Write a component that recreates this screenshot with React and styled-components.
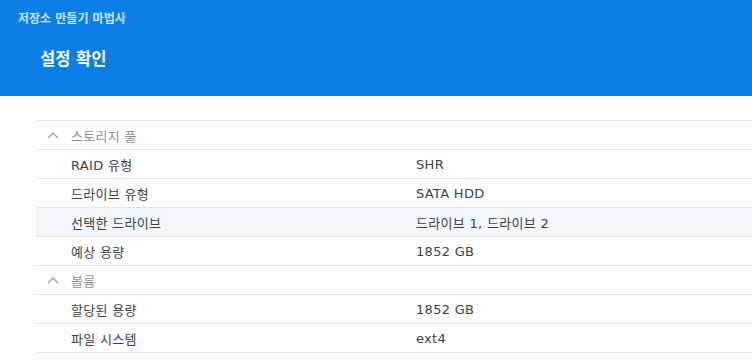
import React from 'react';
import styled, { createGlobalStyle } from 'styled-components';

const GlobalStyle = createGlobalStyle`
  html, body {
    margin: 0;
    padding: 0;
    background: #fff;
    font-family: "DejaVu Sans", "Noto Sans CJK KR", sans-serif;
  }
`;

const sections = [
  {
    title: '스토리지 풀',
    rows: [
      { label: 'RAID 유형', value: 'SHR' },
      { label: '드라이브 유형', value: 'SATA HDD' },
      { label: '선택한 드라이브', value: '드라이브 1, 드라이브 2', active: true },
      { label: '예상 용량', value: '1852 GB' },
    ],
  },
  {
    title: '볼륨',
    rows: [
      { label: '할당된 용량', value: '1852 GB' },
      { label: '파일 시스템', value: 'ext4' },
    ],
  },
];

const Chevron = () => (
  <svg width="12" height="8" viewBox="0 0 12 8" fill="none">
    <path d="M1 7 L6 2 L11 7" stroke="#9aa0a6" strokeWidth="1.3" />
  </svg>
);

const App = () => (
  <Page>
    <GlobalStyle />
    <Header>
      <WizardName>저장소 만들기 마법사</WizardName>
      <StepTitle>설정 확인</StepTitle>
    </Header>
    <Table>
      {sections.map((s) => (
        <React.Fragment key={s.title}>
          <SectionRow>
            <ChevronCell><Chevron /></ChevronCell>
            <SectionTitle>{s.title}</SectionTitle>
          </SectionRow>
          {s.rows.map((r) => (
            <Row key={r.label} $active={r.active}>
              <Label>{r.label}</Label>
              <Value>{r.value}</Value>
            </Row>
          ))}
        </React.Fragment>
      ))}
    </Table>
  </Page>
);

export default App;

const Page = styled.div`
  width: 752px;
  height: 361px;
  overflow: hidden;
`;

const Header = styled.div`
  background: #0b7fe6;
  height: 96px;
  box-sizing: border-box;
  padding: 12px 0 0 18px;
`;

const WizardName = styled.div`
  color: #cfe3f8;
  font-size: 12px;
  font-weight: bold;
  line-height: 14px;
`;

const StepTitle = styled.div`
  color: #fff;
  font-size: 16.5px;
  font-weight: bold;
  line-height: 20px;
  margin: 24px 0 0 22px;
`;

const Table = styled.div`
  margin: 24px 0 0 36px;
  border-top: 1px solid #e3e6ea;
`;

const RowBase = styled.div`
  display: grid;
  grid-template-columns: 380px 1fr;
  height: 29px;
  box-sizing: border-box;
  border-bottom: 1px solid #e3e6ea;
  align-items: center;
  font-size: 13px;
  letter-spacing: 0.3px;
`;

const SectionRow = styled(RowBase)`
  grid-template-columns: 35px 1fr;
`;

const ChevronCell = styled.div`
  display: flex;
  padding-left: 11px;
`;

const SectionTitle = styled.div`
  color: #8c9197;
`;

const Row = styled(RowBase)`
  background: ${(p) => (p.$active ? '#f1f7fd' : '#fff')};
`;

const Label = styled.div`
  color: #3a3f44;
  padding-left: 35px;
`;

const Value = styled.div`
  color: #3a3f44;
`;
